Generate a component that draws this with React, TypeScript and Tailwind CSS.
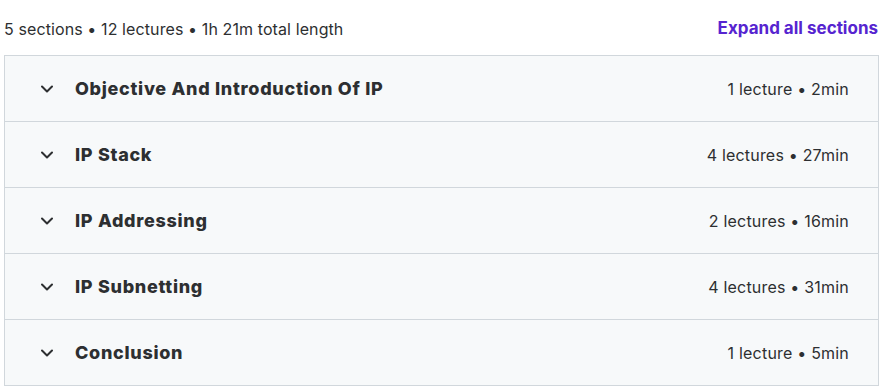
const sections = [
  { title: 'Objective And Introduction Of IP', meta: '1 lecture • 2min' },
  { title: 'IP Stack', meta: '4 lectures • 27min' },
  { title: 'IP Addressing', meta: '2 lectures • 16min' },
  { title: 'IP Subnetting', meta: '4 lectures • 31min' },
  { title: 'Conclusion', meta: '1 lecture • 5min' },
]

function Chevron() {
  return (
    <svg width="12" height="8" viewBox="0 0 12 8" fill="none" className="shrink-0">
      <path d="M1 1.5L6 6.5L11 1.5" stroke="#2d2f31" strokeWidth="2" strokeLinecap="round" strokeLinejoin="round" />
    </svg>
  )
}

export default function App() {
  return (
    <div className="w-[881px] h-[390px] bg-white text-[#2d2f31] font-['Inter',sans-serif]">
      <div className="flex items-end justify-between pl-1 pr-[3px] h-[42px] pb-[1px]">
        <span className="text-[16px] tracking-[0.1px]">5 sections • 12 lectures • 1h 21m total length</span>
        <button className="text-[17px] font-bold text-[#5624d0] tracking-[0px]">Expand all sections</button>
      </div>
      <div className="mt-[13px] ml-1 w-[875px] border-x border-b border-[#d1d7dc]">
        {sections.map((s) => (
          <div
            key={s.title}
            className="flex items-center justify-between h-[66px] bg-[#f7f9fa] pl-[36px] pr-[29px] border-t border-[#d1d7dc]"
          >
            <div className="flex items-center gap-[22px]">
              <Chevron />
              <span className="text-[18px] font-extrabold tracking-[0.7px]">{s.title}</span>
            </div>
            <span className="text-[16px] tracking-[0.2px]">{s.meta}</span>
          </div>
        ))}
      </div>
    </div>
  )
}
